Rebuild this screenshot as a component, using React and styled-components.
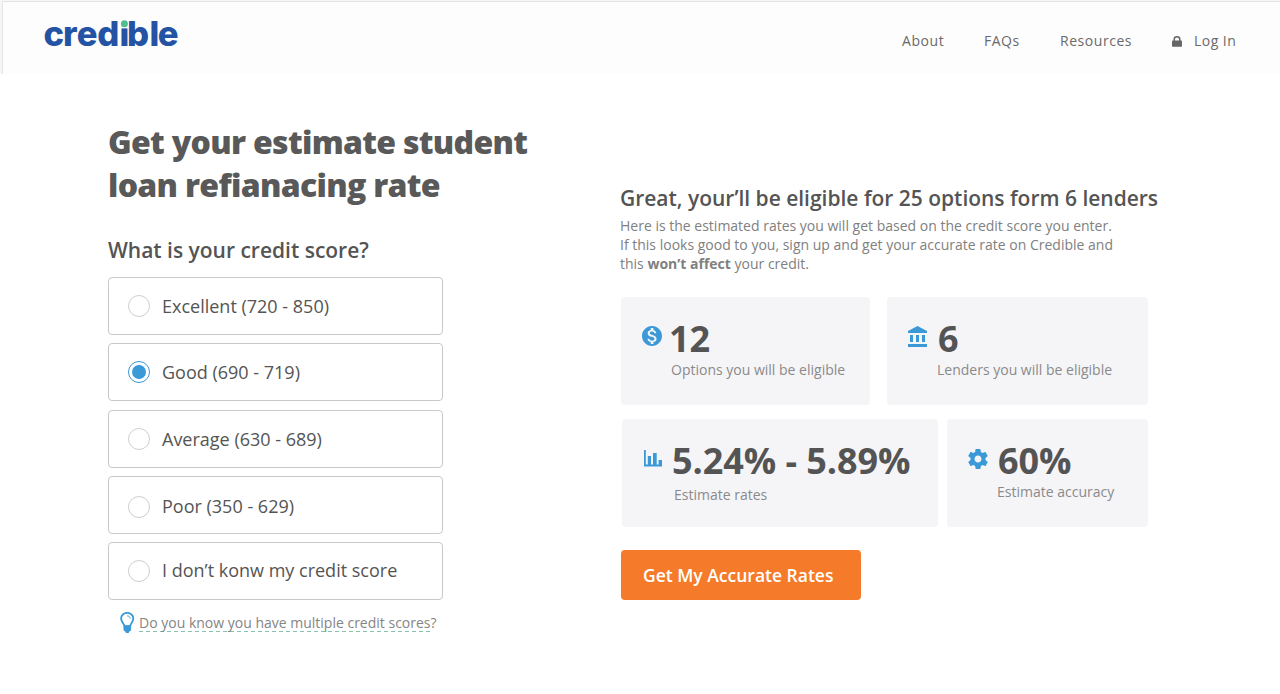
import React, { useState } from "react";
import styled, { createGlobalStyle } from "styled-components";
import { MdMonetizationOn } from "react-icons/md";

const GlobalStyle = createGlobalStyle`
  * { box-sizing: border-box; }
  body {
    margin: 0;
    background: #fff;
    color: #545454;
    font-family: "Open Sans", "Noto Sans", sans-serif;
  }
  h1, h2, p { margin: 0; }
`;

const Page = styled.div`
  width: 1280px;
  height: 694px;
  overflow: hidden;
`;

const Header = styled.header`
  display: flex;
  justify-content: space-between;
  height: 74px;
  padding: 1px 44px 0 41px;
  background: #fdfdfd;
  border: 0 solid #f6f6f6;
  border-width: 1px 0 0 2px;
  box-shadow: inset 1px 1px 0 #e4e4e4;
`;

const Logo = styled.svg`
  width: 146px;
  height: 44px;
  margin-top: 6px;
  overflow: visible;
  text {
    font-family: Inter, sans-serif;
    font-weight: 800;
    font-size: 34.6px;
  }
`;

const Nav = styled.nav`
  display: flex;
  gap: 40px;
  padding-top: 28px;
`;

const NavLink = styled.a`
  display: flex;
  width: ${(p) => p.$width}px;
  font-size: 14px;
  line-height: 22px;
  letter-spacing: ${(p) => p.$spacing}px;
  color: #6a6a6a;
  white-space: nowrap;
  svg { margin: 6px 12px 0 0; flex: none; }
`;

const Main = styled.main`
  display: flex;
`;

const ScoreColumn = styled.section`
  width: 620px;
  padding: 46px 0 0 108px;
`;

const Title = styled.h1`
  font-size: 32px;
  font-weight: 800;
  line-height: 43px;
  letter-spacing: -0.69px;
  color: #595959;
  white-space: nowrap;
`;

const Question = styled.h2`
  margin-top: 30px;
  font-size: 21px;
  font-weight: 600;
  line-height: 28px;
  letter-spacing: -0.01px;
  white-space: nowrap;
`;

const Options = styled.div`
  display: flex;
  flex-direction: column;
  width: 335px;
  margin-top: 13px;
`;

const Option = styled.div`
  display: flex;
  height: 58px;
  margin-bottom: ${(p) => p.$gap}px;
  padding-left: 19px;
  border: 1px solid #c9c9c9;
  border-radius: 4px;
  cursor: pointer;
`;

const Radio = styled.span`
  display: grid;
  place-items: center;
  width: 22px;
  height: 22px;
  margin: ${(p) => p.$top}px 12px 0 0;
  border: 1px solid ${(p) => (p.$on ? "#3b99d8" : "#cfcfcf")};
  border-radius: 50%;
  &::after {
    content: "";
    width: 14px;
    height: 14px;
    border-radius: 50%;
    background: ${(p) => (p.$on ? "#3b99d8" : "transparent")};
  }
`;

const OptionLabel = styled.span`
  margin-top: ${(p) => p.$top}px;
  font-size: 18px;
  line-height: 26px;
  white-space: nowrap;
`;

const Hint = styled.div`
  display: flex;
  margin: 12px 0 0 12px;
  svg { flex: none; }
`;

const HintText = styled.a`
  height: 20px;
  margin-left: 4px;
  font-size: 14px;
  line-height: 22px;
  color: #858585;
  white-space: nowrap;
  background: repeating-linear-gradient(90deg, #86c2ad 0 4px, transparent 4px 7px) 0 100% / 293px 1px no-repeat;
`;

const ResultColumn = styled.section`
  padding-top: 110px;
`;

const Headline = styled.h2`
  font-size: 21px;
  font-weight: 600;
  line-height: 28px;
  letter-spacing: -0.01px;
  white-space: nowrap;
`;

const Description = styled.p`
  margin-top: 4px;
  font-size: 14px;
  line-height: 19px;
  color: #808080;
  white-space: nowrap;
`;

const Cards = styled.div`
  display: flex;
  gap: ${(p) => p.$gap}px;
  margin: ${(p) => p.$top}px 0 0 ${(p) => p.$left}px;
`;

const Card = styled.div`
  display: flex;
  width: ${(p) => p.$width}px;
  height: 108px;
  padding-left: ${(p) => p.$inset}px;
  border-radius: 4px;
  background: #f5f5f8;
  > svg { flex: none; margin-top: ${(p) => p.$iconTop}px; color: #3b99d8; }
`;

const CardBody = styled.div`
  margin-left: ${(p) => p.$left}px;
  white-space: nowrap;
`;

const Figure = styled.div`
  margin: 20px 0 0 ${(p) => p.$shift || 0}px;
  font-size: 36px;
  font-weight: 700;
  line-height: 44px;
  letter-spacing: -0.06px;
`;

const Caption = styled.div`
  margin-top: ${(p) => p.$top || -2}px;
  font-size: 14px;
  line-height: 22px;
  color: #8a8a8a;
`;

const Button = styled.button`
  display: block;
  width: 240px;
  height: 50px;
  margin: 23px 0 0 1px;
  padding: 0 0 0 22px;
  border: 0;
  border-radius: 4px;
  background: #f57a29;
  color: #fff;
  font: 600 17.5px/24px "Open Sans", sans-serif;
  text-align: left;
  white-space: nowrap;
`;

const LockIcon = () => (
  <svg width="10" height="11" viewBox="0 0 10 11">
    <rect x="0" y="4.6" width="10" height="6.2" rx="0.8" fill="#666" />
    <path d="M2.2 5V3.4a2.8 2.6 0 0 1 5.6 0V5" fill="none" stroke="#666" strokeWidth="1.5" />
  </svg>
);

const BulbIcon = () => (
  <svg width="15" height="21" viewBox="0 0 15 21">
    <path
      d="M4.4 14.2C4.2 11.6 1.1 10 1.1 6.6a6.1 5.8 0 0 1 12.2 0c0 3.4-2.9 5-3.1 7.6z"
      fill="#fff"
      stroke="#3b99d8"
      strokeWidth="1.8"
    />
    <path d="M7.2 3.9c1.7 0 2.9 1.1 2.9 2.7" fill="none" stroke="#3b99d8" />
    <path d="M3.5 13.6h7.6v4.6L9.4 19.5 8.6 21H6l-.8-1.5-1.7-1.3z" fill="#3b99d8" />
  </svg>
);

const BankIcon = () => (
  <svg width="24" height="24" viewBox="0 0 24 24" fill="currentColor">
    <path d="M4 10v7h3v-7H4zm6 0v7h3v-7h-3zM2 22h19v-3H2v3zm14-12v7h3v-7h-3zm-4.5-9L2 6v2h19V6l-9.5-5z" />
  </svg>
);

const GearIcon = () => (
  <svg width="24" height="24" viewBox="0 0 24 24" fill="currentColor">
    <path d="M19.43 12.98c.04-.32.07-.64.07-.98s-.03-.66-.07-.98l2.11-1.65c.19-.15.24-.42.12-.64l-2-3.46c-.12-.22-.39-.3-.61-.22l-2.49 1c-.52-.4-1.08-.73-1.69-.98l-.38-2.65A.488.488 0 0 0 14 2h-4c-.25 0-.46.18-.49.42l-.38 2.65c-.61.25-1.17.59-1.69.98l-2.49-1c-.23-.09-.49 0-.61.22l-2 3.46c-.13.22-.07.49.12.64l2.11 1.65c-.04.32-.07.65-.07.98s.03.66.07.98l-2.11 1.65c-.19.15-.24.42-.12.64l2 3.46c.12.22.39.3.61.22l2.49-1c.52.4 1.08.73 1.69.98l.38 2.65c.03.24.24.42.49.42h4c.25 0 .46-.18.49-.42l.38-2.65c.61-.25 1.17-.59 1.69-.98l2.49 1c.23.09.49 0 .61-.22l2-3.46c.12-.22.07-.49-.12-.64l-2.11-1.65zM12 15.5c-1.93 0-3.5-1.57-3.5-3.5s1.57-3.5 3.5-3.5 3.5 1.57 3.5 3.5-1.57 3.5-3.5 3.5z" />
  </svg>
);

const ChartIcon = () => (
  <svg width="18" height="17" viewBox="0 0 18 17">
    <path d="M0 0h1.8v14.5H18v2H0z" fill="#3b99d8" />
    <path d="M3.8 6H7v9H3.8zM9 3h3.7v12H9zM14.6 10H18v5h-3.4z" fill="#3b99d8" />
  </svg>
);

const scores = [
  { label: "Excellent (720 - 850)", gap: 8, radio: 17, text: 15 },
  { label: "Good (690 - 719)", gap: 9, radio: 17, text: 15 },
  { label: "Average (630 - 689)", gap: 8, radio: 17, text: 15 },
  { label: "Poor (350 - 629)", gap: 8, radio: 19, text: 16 },
  { label: "I don’t konw my credit score", gap: 0, radio: 17, text: 14 },
];

export default function App() {
  const [selected, setSelected] = useState(1);
  return (
    <Page>
      <GlobalStyle />
      <Header>
        <Logo viewBox="0 0 146 44" role="img">
          <text x="0.4 20 33.8 54.2 76.4 84 106.4 114.8" y="38.2" fill="#2453a4">credible</text>
          <rect x="77.6" y="11" width="7.8" height="9.4" fill="#fdfdfd" />
          <circle cx="81.4" cy="15.8" r="3.5" fill="#50be91" />
        </Logo>
        <Nav>
          <NavLink $width={42} $spacing={0.55}>About</NavLink>
          <NavLink $width={36} $spacing={0.5}>FAQs</NavLink>
          <NavLink $width={72} $spacing={0.55}>Resources</NavLink>
          <NavLink $width={64} $spacing={0.45}><LockIcon />Log In</NavLink>
        </Nav>
      </Header>
      <Main>
        <ScoreColumn>
          <Title>Get your estimate student<br />loan refianacing rate</Title>
          <Question>What is your credit score?</Question>
          <Options role="radiogroup">
            {scores.map((s, i) => (
              <Option key={s.label} $gap={s.gap} onClick={() => setSelected(i)}>
                <Radio $on={selected === i} $top={s.radio} />
                <OptionLabel $top={s.text}>{s.label}</OptionLabel>
              </Option>
            ))}
          </Options>
          <Hint>
            <BulbIcon />
            <HintText>Do you know you have multiple credit scores?</HintText>
          </Hint>
        </ScoreColumn>
        <ResultColumn>
          <Headline>Great, your’ll be eligible for 25 options form 6 lenders</Headline>
          <Description>
            Here is the estimated rates you will get based on the credit score you enter.<br />
            If this looks good to you, sign up and get your accurate rate on Credible and<br />
            this <b>won’t affect</b> your credit.
          </Description>
          <Cards $gap={17} $top={24} $left={1}>
            <Card $width={249} $inset={19} $iconTop={27}>
              <MdMonetizationOn size={24} />
              <CardBody $left={7}>
                <Figure $shift={-2}>12</Figure>
                <Caption>Options you will be eligible</Caption>
              </CardBody>
            </Card>
            <Card $width={261} $inset={19} $iconTop={28}>
              <BankIcon />
              <CardBody $left={7}>
                <Figure $shift={1}>6</Figure>
                <Caption>Lenders you will be eligible</Caption>
              </CardBody>
            </Card>
          </Cards>
          <Cards $gap={9} $top={14} $left={2}>
            <Card $width={316} $inset={22} $iconTop={31}>
              <ChartIcon />
              <CardBody $left={12}>
                <Figure $shift={-2}>5.24% - 5.89%</Figure>
                <Caption $top={1}>Estimate rates</Caption>
              </CardBody>
            </Card>
            <Card $width={201} $inset={19} $iconTop={28}>
              <GearIcon />
              <CardBody $left={7}>
                <Figure $shift={1}>60%</Figure>
                <Caption>Estimate accuracy</Caption>
              </CardBody>
            </Card>
          </Cards>
          <Button>Get My Accurate Rates</Button>
        </ResultColumn>
      </Main>
    </Page>
  );
}
